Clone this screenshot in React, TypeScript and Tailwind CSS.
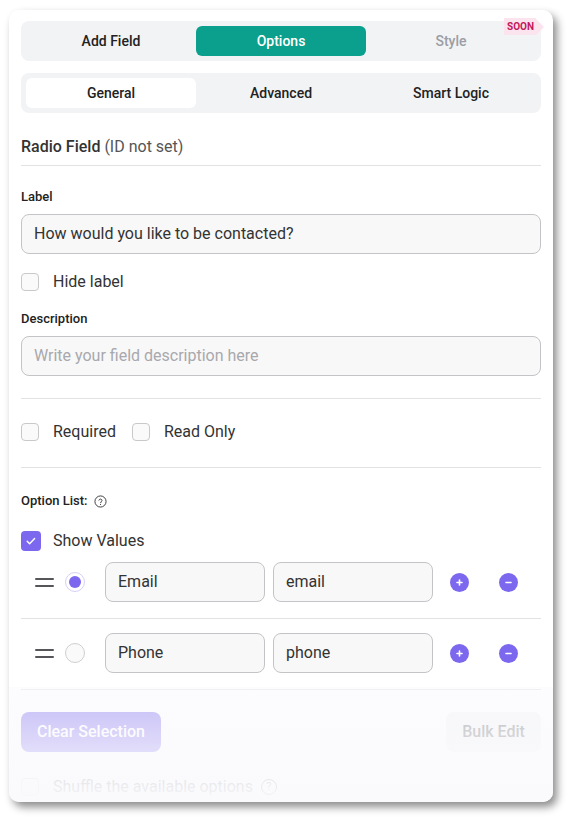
import React from 'react';

const FONT = { fontFamily: 'Roboto, "Liberation Sans", sans-serif' };

function Checkbox({ checked = false }: { checked?: boolean }) {
  if (checked) {
    return (
      <span className="w-[20px] h-[20px] rounded-[4px] bg-[#7b68ee] flex items-center justify-center shrink-0">
        <svg width="12" height="12" viewBox="0 0 12 12" fill="none">
          <path d="M2.2 6.3l2.4 2.4 5-5.2" stroke="#fff" strokeWidth="1.4" strokeLinecap="round" strokeLinejoin="round" />
        </svg>
      </span>
    );
  }
  return <span className="w-[18px] h-[18px] rounded-[4px] border border-[#c9c9cc] bg-[#fafafa] shrink-0" />;
}

function CheckRow({ label, checked }: { label: string; checked?: boolean }) {
  return (
    <label className="flex items-center gap-3 h-6">
      <span className="w-5 flex items-center">
        <Checkbox checked={checked} />
      </span>
      <span className="text-[16px] text-[#333]">{label}</span>
    </label>
  );
}

function Circle({ minus = false }: { minus?: boolean }) {
  return (
    <span className="w-[19px] h-[19px] rounded-full bg-[#7b68ee] flex items-center justify-center">
      <svg width="9" height="9" viewBox="0 0 9 9">
        <path d="M2 4.5h5" stroke="#fff" strokeWidth="1.6" strokeLinecap="round" />
        {!minus && <path d="M4.5 2v5" stroke="#fff" strokeWidth="1.6" strokeLinecap="round" />}
      </svg>
    </span>
  );
}

function OptionRow({ label, value, selected }: { label: string; value: string; selected?: boolean }) {
  return (
    <div className="flex items-center h-10">
      <div className="w-[84px] flex items-center pl-[14px] gap-[11px]">
        <span className="flex flex-col gap-[5px] w-[19px]">
          <span className="h-[2px] bg-[#55555a] rounded-full" />
          <span className="h-[2px] bg-[#55555a] rounded-full" />
        </span>
        {selected ? (
          <span className="w-5 h-5 rounded-full border border-[#d5d0f5] bg-white flex items-center justify-center">
            <span className="w-[12px] h-[12px] rounded-full bg-[#7b68ee]" />
          </span>
        ) : (
          <span className="w-5 h-5 rounded-full border border-[#cfcfd3] bg-[#fafafa]" />
        )}
      </div>
      <div className="w-[160px] h-10 rounded-lg border border-[#c4c4c8] bg-[#f8f8f8] flex items-center px-3 text-[16px] text-[#333]">
        {label}
      </div>
      <div className="w-[160px] h-10 ml-2 rounded-lg border border-[#c4c4c8] bg-[#f8f8f8] flex items-center px-3 text-[16px] text-[#333]">
        {value}
      </div>
      <div className="ml-[17px] flex items-center gap-[30px]">
        <Circle />
        <Circle minus />
      </div>
    </div>
  );
}

export default function App() {
  return (
    <div className="bg-white w-[574px] h-[824px] pt-[10px] pl-[9px]" style={FONT}>
      <div className="relative w-[544px] h-[792px] rounded-[10px] bg-white overflow-hidden shadow-[4px_5px_9px_rgba(0,0,0,0.45)] px-3 pt-[11px]">
        {/* top tabs */}
        <div className="h-10 rounded-lg bg-[#f2f3f5] p-[5px] grid grid-cols-3 text-[14px] font-medium">
          <div className="flex items-center justify-center text-[#222]">Add Field</div>
          <div className="flex items-center justify-center rounded-md bg-[#0aa08d] text-white">Options</div>
          <div className="relative flex items-center justify-center text-[#9b9ea4]">
            Style
            <span className="absolute right-[-8px] top-[-8px] flex items-center">
              <span className="h-[17px] bg-[#fce4ee] text-[#c2185b] text-[10px] font-bold flex items-center pl-[3px] pr-[2px]">SOON</span>
              <span className="w-0 h-0 border-y-[8.5px] border-y-transparent border-l-[8px] border-l-[#fce4ee]" />
            </span>
          </div>
        </div>

        {/* sub tabs */}
        <div className="mt-3 h-10 rounded-lg bg-[#f2f3f5] p-[5px] grid grid-cols-3 text-[14px] font-medium text-[#222]">
          <div className="flex items-center justify-center rounded-md bg-white">General</div>
          <div className="flex items-center justify-center">Advanced</div>
          <div className="flex items-center justify-center">Smart Logic</div>
        </div>

        <div className="mt-[22px] pb-[6px] border-b border-[#e2e2e5] text-[16px] leading-6">
          <span className="font-medium text-[#333]">Radio Field</span>{' '}
          <span className="text-[#555]">(ID not set)</span>
        </div>

        <div className="mt-[22px] text-[13px] font-medium text-[#222] leading-[18px]">Label</div>
        <div className="mt-2 h-10 rounded-lg border border-[#c4c4c8] bg-[#f8f8f8] flex items-center px-3 text-[16px] text-[#333]">
          How would you like to be contacted?
        </div>
        <div className="mt-4">
          <CheckRow label="Hide label" />
        </div>

        <div className="mt-4 text-[13px] font-medium text-[#222] leading-[18px]">Description</div>
        <div className="mt-2 h-10 rounded-lg border border-[#c4c4c8] bg-[#f8f8f8] flex items-center px-3 text-[16px] text-[#a8a8ad]">
          Write your field description here
        </div>

        <div className="mt-[22px] border-t border-[#e2e2e5]" />
        <div className="mt-[21px] flex items-center gap-4">
          <CheckRow label="Required" />
          <CheckRow label="Read Only" />
        </div>
        <div className="mt-[23px] border-t border-[#e2e2e5]" />

        <div className="mt-6 flex items-center gap-[6px] text-[13px] font-medium text-[#222] leading-[18px]">
          Option List:
          <svg width="13" height="13" viewBox="0 0 14 14" fill="none">
            <circle cx="7" cy="7" r="6" stroke="#333" strokeWidth="1" />
            <path d="M5.3 5.5a1.7 1.7 0 0 1 3.3.5c0 1.1-1.6 1.3-1.6 2.3" stroke="#333" strokeWidth="1" strokeLinecap="round" />
            <circle cx="7" cy="10.2" r="0.6" fill="#333" />
          </svg>
        </div>
        <div className="mt-[19px]">
          <CheckRow label="Show Values" checked />
        </div>

        <div className="mt-[9px] pb-4 border-b border-[#e2e2e5]">
          <OptionRow label="Email" value="email" selected />
        </div>
        <div className="mt-[14px] pb-4 border-b border-[#e2e2e5]">
          <OptionRow label="Phone" value="phone" />
        </div>

        <div className="mt-[22px] flex items-center justify-between">
          <button className="h-10 w-[140px] rounded-lg bg-[#7b68ee] text-white text-[16px] font-medium">Clear Selection</button>
          <button className="h-10 w-[95px] rounded-lg bg-[#f2f3f5] text-[#666] text-[16px] font-medium">Bulk Edit</button>
        </div>
        <div className="mt-[23px] flex items-center gap-3">
          <span className="w-5 flex items-center">
            <Checkbox />
          </span>
          <span className="text-[16px] text-[#333] flex items-center gap-2">
            Shuffle the available options
            <span className="w-[16px] h-[16px] rounded-full border border-[#333] text-[11px] flex items-center justify-center">?</span>
          </span>
        </div>

        {/* fade overlay */}
        <div className="absolute left-0 right-0 bottom-0 h-[115px] bg-gradient-to-b from-[rgba(250,250,253,0.55)] via-[rgba(250,250,253,0.78)] to-[rgba(250,250,253,0.98)]" />
      </div>
    </div>
  );
}
